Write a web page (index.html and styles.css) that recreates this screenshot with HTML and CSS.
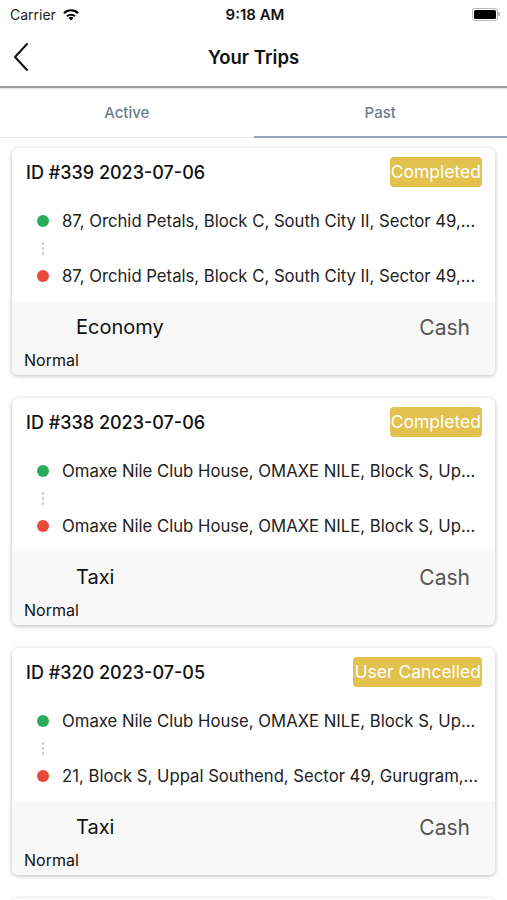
FILE: index.html
```html
<!DOCTYPE html>
<html lang="en">
<head>
    <meta charset="UTF-8">
    <meta name="viewport" content="width=device-width, initial-scale=1.0">
    <title>Your Trips</title>
    <link rel="stylesheet" href="styles.css">
</head>
<body>
    <!-- Barre d'état -->
    <div class="status-bar">
        <div class="carrier">
            Carrier
            <svg class="wifi" width="18" height="13" viewBox="0 0 18 13">
                <path d="M9 12.5 L6.6 9.9 A3.4 3.4 0 0 1 11.4 9.9 Z" fill="#000"/>
                <path d="M4.4 7.6 A6.5 6.5 0 0 1 13.6 7.6 L12.2 9.1 A4.5 4.5 0 0 0 5.8 9.1 Z" fill="#000"/>
                <path d="M1.2 4.4 A11 11 0 0 1 16.8 4.4 L15.3 5.9 A8.9 8.9 0 0 0 2.7 5.9 Z" fill="#000"/>
            </svg>
        </div>
        <div class="clock">9:18 AM</div>
        <div class="battery">
            <span class="battery-body"><span class="battery-level"></span></span>
            <span class="battery-tip"></span>
        </div>
    </div>

    <!-- Barre de navigation -->
    <div class="nav-bar">
        <div class="back">
            <svg width="18" height="30" viewBox="0 0 18 30">
                <path d="M15 2 L3 15 L15 28" fill="none" stroke="#111" stroke-width="2" stroke-linecap="round" stroke-linejoin="round"/>
            </svg>
        </div>
        <div class="nav-title">Your Trips</div>
        <div></div>
    </div>

    <!-- Onglets -->
    <div class="tabs">
        <div class="tab">Active</div>
        <div class="tab active">Past</div>
    </div>

    <!-- Liste des courses -->
    <div class="trip-list">
        <div class="trip-card">
            <div class="trip-head">
                <span class="trip-id">ID #339 2023-07-06</span>
                <span class="badge">Completed</span>
            </div>
            <div class="route">
                <div class="stop"><span class="dot pickup"></span><span class="address">87, Orchid Petals, Block C, South City II, Sector 49,...</span></div>
                <div class="dots"><i></i><i></i><i></i></div>
                <div class="stop"><span class="dot drop"></span><span class="address">87, Orchid Petals, Block C, South City II, Sector 49,...</span></div>
            </div>
            <div class="trip-foot">
                <div class="foot-row">
                    <span class="vehicle">Economy</span>
                    <span class="payment">Cash</span>
                </div>
                <div class="ride-type">Normal</div>
            </div>
        </div>

        <div class="trip-card">
            <div class="trip-head">
                <span class="trip-id">ID #338 2023-07-06</span>
                <span class="badge">Completed</span>
            </div>
            <div class="route">
                <div class="stop"><span class="dot pickup"></span><span class="address">Omaxe Nile Club House, OMAXE NILE, Block S, Up...</span></div>
                <div class="dots"><i></i><i></i><i></i></div>
                <div class="stop"><span class="dot drop"></span><span class="address">Omaxe Nile Club House, OMAXE NILE, Block S, Up...</span></div>
            </div>
            <div class="trip-foot">
                <div class="foot-row">
                    <span class="vehicle">Taxi</span>
                    <span class="payment">Cash</span>
                </div>
                <div class="ride-type">Normal</div>
            </div>
        </div>

        <div class="trip-card">
            <div class="trip-head">
                <span class="trip-id">ID #320 2023-07-05</span>
                <span class="badge">User Cancelled</span>
            </div>
            <div class="route">
                <div class="stop"><span class="dot pickup"></span><span class="address">Omaxe Nile Club House, OMAXE NILE, Block S, Up...</span></div>
                <div class="dots"><i></i><i></i><i></i></div>
                <div class="stop"><span class="dot drop"></span><span class="address">21, Block S, Uppal Southend, Sector 49, Gurugram,...</span></div>
            </div>
            <div class="trip-foot">
                <div class="foot-row">
                    <span class="vehicle">Taxi</span>
                    <span class="payment">Cash</span>
                </div>
                <div class="ride-type">Normal</div>
            </div>
        </div>

        <div class="trip-card"></div>
    </div>
</body>
</html>
```

FILE: styles.css
```css
html {
    overflow: hidden;
}
body {
    font-family: Inter, "Liberation Sans", sans-serif;
    margin: 0;
    padding: 0;
    background-color: #fff;
    color: #111;
    width: 507px;
    height: 900px;
    overflow: hidden;
}

/* Barre d'état */
.status-bar {
    height: 28px;
    display: flex;
    align-items: center;
    justify-content: space-between;
    padding: 0 7px 0 10px;
}
.carrier {
    display: flex;
    align-items: center;
    gap: 6px;
    font-size: 14px;
    color: #222;
    width: 120px;
}
.clock {
    font-size: 15px;
    font-weight: 600;
}
.battery {
    width: 120px;
    display: flex;
    justify-content: flex-end;
    align-items: center;
}
.battery-body {
    width: 22px;
    height: 9px;
    border: 1.5px solid #bbb;
    border-radius: 3px;
    padding: 1px;
    display: flex;
}
.battery-level {
    flex: 1;
    background-color: #000;
    border-radius: 1.5px;
}
.battery-tip {
    width: 2px;
    height: 4px;
    background-color: #bbb;
    border-radius: 0 1px 1px 0;
}

/* Barre de navigation */
.nav-bar {
    height: 58px;
    display: grid;
    grid-template-columns: 1fr auto 1fr;
    align-items: center;
    border-bottom: 2px solid #9a9a9a;
    box-shadow: 0 1px 2px rgba(0, 0, 0, 0.15);
}
.back {
    padding-left: 12px;
    display: flex;
    align-items: center;
}
.nav-title {
    font-size: 18.5px;
    font-weight: 600;
    color: #111;
}

/* Onglets */
.tabs {
    display: flex;
    height: 49px;
    border-bottom: 1px solid #e4e4e4;
}
.tab {
    flex: 1;
    display: flex;
    align-items: center;
    justify-content: center;
    font-size: 15px;
    font-weight: 500;
    color: #6b7d8e;
    border-bottom: 2px solid transparent;
    margin-bottom: -1px;
}
.tab.active {
    border-bottom-color: #8fa3bf;
}

/* Cartes */
.trip-list {
    display: flex;
    flex-direction: column;
    gap: 23px;
    padding: 10px 12px;
}
.trip-card {
    min-height: 227px;
    background-color: #fff;
    border-radius: 6px;
    box-shadow: 0 1px 4px rgba(0, 0, 0, 0.28);
    overflow: hidden;
    display: flex;
    flex-direction: column;
}
.trip-head {
    display: flex;
    justify-content: space-between;
    align-items: center;
    padding: 9px 13px 0 14px;
    height: 30px;
}
.trip-id {
    font-size: 18px;
    font-weight: 500;
    color: #111;
}
.badge {
    background-color: #e2c14f;
    color: #fff;
    font-size: 17.5px;
    line-height: 30px;
    padding: 0 1px;
    border-radius: 4px;
}
.route {
    padding: 22px 12px 13px 25px;
}
.stop {
    display: flex;
    align-items: center;
    height: 24px;
    gap: 13px;
}
.dot {
    width: 12px;
    height: 12px;
    border-radius: 50%;
    flex-shrink: 0;
}
.dot.pickup {
    background-color: #2bab5c;
}
.dot.drop {
    background-color: #e8493b;
}
.address {
    font-size: 16.7px;
    color: #222;
    white-space: nowrap;
}
.dots {
    height: 31px;
    display: flex;
    flex-direction: column;
    justify-content: center;
    gap: 2px;
    padding-left: 5px;
}
.dots i {
    width: 2px;
    height: 3px;
    background-color: #c8c8c8;
    border-radius: 1px;
}
.trip-foot {
    background-color: #f8f8f8;
    height: 74px;
}
.foot-row {
    display: flex;
    justify-content: space-between;
    align-items: center;
    height: 52px;
    padding: 0 25px 0 64px;
}
.vehicle {
    font-size: 20px;
    color: #111;
}
.payment {
    font-size: 21px;
    color: #555;
}
.ride-type {
    font-size: 16px;
    color: #111;
    padding-left: 12px;
    line-height: 14px;
}
```
